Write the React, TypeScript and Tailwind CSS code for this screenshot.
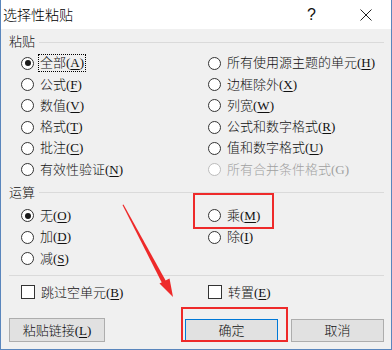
import React from "react";

const font = "font-['Liberation_Serif','Noto_Sans_CJK_SC',serif]";

type Opt = { label: string; k: string; checked?: boolean; disabled?: boolean; focus?: boolean };

const pasteLeft: Opt[] = [
    { label: "全部", k: "A", checked: true, focus: true },
    { label: "公式", k: "F" },
    { label: "数值", k: "V" },
    { label: "格式", k: "T" },
    { label: "批注", k: "C" },
    { label: "有效性验证", k: "N" },
];

const pasteRight: Opt[] = [
    { label: "所有使用源主题的单元", k: "H" },
    { label: "边框除外", k: "X" },
    { label: "列宽", k: "W" },
    { label: "公式和数字格式", k: "R" },
    { label: "值和数字格式", k: "U" },
    { label: "所有合并条件格式", k: "G", disabled: true },
];

const opLeft: Opt[] = [
    { label: "无", k: "O", checked: true },
    { label: "加", k: "D" },
    { label: "减", k: "S" },
];

const opRight: Opt[] = [
    { label: "乘", k: "M" },
    { label: "除", k: "I" },
];

function Label({ label, k, disabled }: { label: string; k: string; disabled?: boolean }) {
    return (
        <span className={disabled ? "text-[#a0a0a0]" : "text-[#111]"}>
            {label}(<span className={disabled ? "" : "underline underline-offset-2"}>{k}</span>)
        </span>
    );
}

function Radio({ o }: { o: Opt }) {
    return (
        <div className="h-[21.3px] flex items-center gap-[6px]">
            <div className={`w-[13px] h-[13px] rounded-full border bg-white flex items-center justify-center shrink-0 ${o.disabled ? "border-[#bcbcbc]" : "border-[#333]"}`}>
                {o.checked && <div className="w-[6px] h-[6px] rounded-full bg-[#1a1a1a]" />}
            </div>
            <div className={`leading-[16px] ${o.focus ? "outline outline-1 outline-dotted outline-black outline-offset-0 px-[1px] -ml-[1px]" : ""}`}>
                <Label label={o.label} k={o.k} disabled={o.disabled} />
            </div>
        </div>
    );
}

function Group({ title }: { title: string }) {
    return (
        <div className="h-[16px] flex items-center gap-[4px]">
            <span className="leading-[16px] text-[#111]">{title}</span>
            <div className="flex-1 h-px bg-[#dadada]" />
        </div>
    );
}

function Check({ label, k }: { label: string; k: string }) {
    return (
        <div className="h-[16px] flex items-center gap-[6px]">
            <div className="w-[14px] h-[14px] border border-[#333] bg-white shrink-0" />
            <Label label={label} k={k} />
        </div>
    );
}

export default function App() {
    return (
        <div className={`relative w-[392px] h-[350px] flex flex-col bg-[#f0f0f0] border-x border-b border-[#5a86bd] text-[13px] font-light ${font}`}>
            {/* title bar */}
            <div className="h-[29px] bg-white flex items-center shrink-0">
                <span className="pl-[2px] text-[14px] text-black font-['Noto_Sans_CJK_SC',sans-serif]">选择性粘贴</span>
                <span className="ml-auto mr-[44px] text-[16px] font-['Liberation_Sans',sans-serif] text-[#111]">?</span>
                <svg width="12" height="12" viewBox="0 0 12 12" className="mr-[19px]">
                    <path d="M0.5 0.5 L11.5 11.5 M11.5 0.5 L0.5 11.5" stroke="#222" strokeWidth="1" />
                </svg>
            </div>

            <div className="flex flex-col pl-[8px] pr-[7px]">
                <div className="mt-[5px]"><Group title="粘贴" /></div>
                <div className="mt-[2.6px] pl-[12px] grid grid-cols-[187px_1fr]">
                    <div className="flex flex-col">
                        {pasteLeft.map(o => <Radio key={o.k} o={o} />)}
                    </div>
                    <div className="flex flex-col">
                        {pasteRight.map(o => <Radio key={o.k} o={o} />)}
                    </div>
                </div>

                <div className="mt-[4.5px]"><Group title="运算" /></div>
                <div className="mt-[4.4px] pl-[12px] grid grid-cols-[187px_1fr]">
                    <div className="flex flex-col">
                        {opLeft.map(o => <Radio key={o.k} o={o} />)}
                    </div>
                    <div className="flex flex-col">
                        {opRight.map(o => <Radio key={o.k} o={o} />)}
                    </div>
                </div>

                <div className="mt-[5.7px] h-px bg-[#dadada]" />

                <div className="mt-[8.5px] pl-[12px] grid grid-cols-[187px_1fr]">
                    <Check label="跳过空单元" k="B" />
                    <Check label="转置" k="E" />
                </div>

                <div className="mt-[18px] flex items-center">
                    <button className="w-[96px] h-[24px] bg-[#e1e1e1] border border-[#adadad] text-black">
                        <Label label="粘贴链接" k="L" />
                    </button>
                    <button className="ml-[80px] w-[93px] h-[23px] bg-[#e1e1e1] border border-[#0078d7] text-[#111]">确定</button>
                    <button className="ml-[13px] w-[93px] h-[23px] bg-[#e1e1e1] border border-[#adadad] text-[#111]">取消</button>
                </div>
            </div>

            {/* annotations */}
            <div className="absolute left-[192px] top-[193px] w-[81px] h-[36px] border-2 border-[#ee2a2a]" />
            <div className="absolute left-[180px] top-[307px] w-[107px] h-[35px] border-2 border-[#ee2a2a]" />
            <svg className="absolute left-0 top-0 pointer-events-none" width="392" height="350">
                <polygon points="121.5,205 122.5,204.6 166,283 162,285" fill="#ee2a2a" />
                <polygon points="172,297 158.5,283.5 168.5,278.5" fill="#ee2a2a" />
            </svg>
        </div>
    );
}
